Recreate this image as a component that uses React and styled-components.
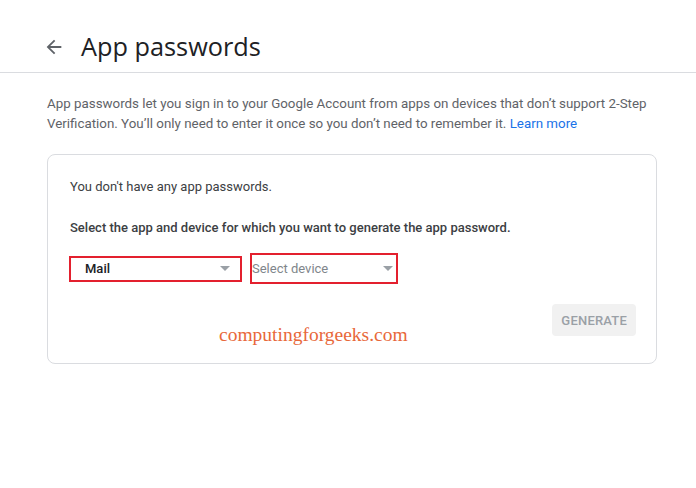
import React from 'react'
import styled, { createGlobalStyle } from 'styled-components'

const Global = createGlobalStyle`
  body {
    margin: 0;
    background: #fff;
    font-family: Roboto, "Liberation Sans", Arial, sans-serif;
  }
`

const Page = styled.div`
  position: relative;
  width: 696px;
  height: 488px;
  overflow: hidden;
`

// Header
const Header = styled.header`
  height: 73px;
  box-sizing: border-box;
  border-bottom: 1px solid #dadce0;
  display: flex;
  align-items: center;
  padding: 22px 0 0 43px;
`

const Back = styled.button`
  border: none;
  background: none;
  padding: 0;
  width: 22px;
  height: 22px;
  display: flex;
  align-items: center;
  justify-content: center;
  margin-right: 16px;
  cursor: pointer;
`

const Title = styled.h1`
  margin: 0;
  margin-top: -2px;
  font-family: "Open Sans", Roboto, sans-serif;
  font-weight: 400;
  font-size: 25.3px;
  color: #202124;
`

// Body
const Content = styled.main`
  padding: 21px 47px 0 47px;
`

const Intro = styled.p`
  margin: 0;
  font-size: 13.35px;
  line-height: 19.5px;
  color: #5f6368;
  max-width: 612px;
`

const Link = styled.a`
  color: #1a73e8;
  text-decoration: none;
`

const Card = styled.section`
  margin-top: 21px;
  width: 610px;
  height: 210px;
  box-sizing: border-box;
  border: 1px solid #dadce0;
  border-radius: 8px;
  padding: 23px 22px 0 22px;
  display: flex;
  flex-direction: column;
`

const Note = styled.p`
  margin: 0;
  font-size: 13px;
  line-height: 18px;
  color: #3c4043;
  font-weight: ${p => (p.$strong ? 500 : 400)};
  margin-top: ${p => p.$gap || 0}px;
`

const Selects = styled.div`
  display: flex;
  align-items: center;
  margin: 16px 0 0 -1px;
  gap: 8px;
`

const Dropdown = styled.div`
  box-sizing: border-box;
  width: ${p => p.$w}px;
  height: ${p => p.$h}px;
  border: 2px solid #e3202e;
  display: flex;
  align-items: center;
  justify-content: space-between;
  padding: 0 ${p => p.$pr}px 0 ${p => p.$pl}px;
  font-size: 13px;
  font-weight: ${p => (p.$placeholder ? 400 : 500)};
  color: ${p => (p.$placeholder ? '#80868b' : '#202124')};
`

const Caret = styled.span`
  width: 0;
  height: 0;
  border-left: 5px solid transparent;
  border-right: 5px solid transparent;
  border-top: 5px solid #9aa0a6;
`

const Actions = styled.div`
  display: flex;
  justify-content: flex-end;
  margin: 20px -2px 0 0;
`

const Generate = styled.button`
  border: none;
  border-radius: 4px;
  background: #f1f1f1;
  color: #9aa0a6;
  font-family: Roboto, sans-serif;
  font-weight: 500;
  font-size: 13px;
  letter-spacing: 0.2px;
  padding: 0 9px;
  height: 32px;
  cursor: default;
`

const Watermark = styled.div`
  position: absolute;
  left: 219px;
  top: 324px;
  font-family: "Liberation Serif", "DejaVu Serif", serif;
  font-size: 19.5px;
  color: #e8683a;
`

const ArrowIcon = () => (
  <svg width="22" height="22" viewBox="0 0 24 24">
    <path d="M20 11H7.83l5.59-5.59L12 4l-8 8 8 8 1.41-1.41L7.83 13H20v-2z" fill="#5f6368" />
  </svg>
)

export default function App() {
  return (
    <Page>
      <Global />
      <Header>
        <Back aria-label="Back"><ArrowIcon /></Back>
        <Title>App passwords</Title>
      </Header>
      <Content>
        <Intro>
          App passwords let you sign in to your Google Account from apps on devices that don’t support 2-Step
          Verification. You’ll only need to enter it once so you don’t need to remember it. <Link href="#">Learn more</Link>
        </Intro>
        <Card>
          <Note>You don't have any app passwords.</Note>
          <Note $strong $gap={23}>Select the app and device for which you want to generate the app password.</Note>
          <Selects>
            <Dropdown $w={173} $h={26} $pl={14} $pr={10}>
              Mail
              <Caret />
            </Dropdown>
            <Dropdown $w={148} $h={31} $pl={0} $pr={3} $placeholder>
              Select device
              <Caret />
            </Dropdown>
          </Selects>
          <Actions>
            <Generate>GENERATE</Generate>
          </Actions>
        </Card>
      </Content>
      <Watermark>computingforgeeks.com</Watermark>
    </Page>
  )
}
